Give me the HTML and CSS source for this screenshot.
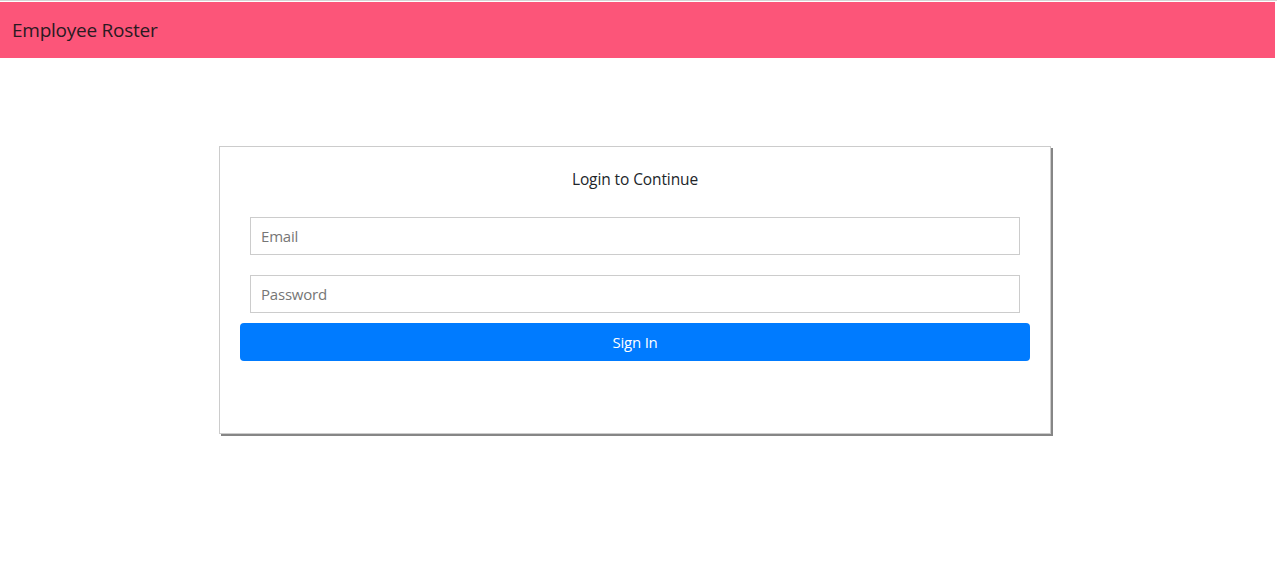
FILE: index.html
```html
<!DOCTYPE html>
<html lang="en">
<head>
<meta charset="utf-8">
<title>Employee Roster</title>
<link rel="stylesheet" href="styles.css">
</head>
<body>
<header class="topbar">
  <span class="brand">Employee Roster</span>
</header>
<main class="page">
  <form class="login-card">
    <h2 class="login-title">Login to Continue</h2>
    <input class="field" type="email" placeholder="Email">
    <input class="field field-password" type="password" placeholder="Password">
    <button class="signin" type="button">Sign In</button>
  </form>
</main>
</body>
</html>
```
FILE: styles.css
```css
* { box-sizing: border-box; }
html, body { margin: 0; padding: 0; background: #fff; }
body {
  font-family: "Open Sans", "Noto Sans", "Liberation Sans", sans-serif;
  color: #212529;
  border-top: 1px solid #d4d4d4;
  padding-top: 1px;
}
.topbar {
  width: calc(100% - 2px);
  height: 56px;
  background: #fc5579;
  display: flex;
  align-items: center;
  padding-left: 12px;
}
.brand {
  font-size: 19px;
  letter-spacing: -0.25px;
  color: #2a1a22;
}
.page {
  padding: 88px 0 40px 219px;
}
.login-card {
  width: 832px;
  height: 288px;
  border: 1px solid #cccccc;
  box-shadow: 2px 2px 0 0 #868686;
  display: flex;
  flex-direction: column;
  padding: 20px 20px 0 20px;
}
.login-title {
  margin: 0 0 26px 0;
  font-size: 15.5px;
  font-weight: 400;
  line-height: 24px;
  text-align: center;
  letter-spacing: -0.1px;
  color: #212529;
}
.field {
  margin: 0 10px;
  height: 38px;
  border: 1px solid #cccccc;
  border-radius: 0;
  padding: 0 10px;
  font-family: inherit;
  font-size: 15px;
  letter-spacing: -0.2px;
  color: #495057;
  outline: none;
}
.field::placeholder { color: #767676; }
.field-password { margin-top: 20px; }
.signin {
  margin-top: 10px;
  height: 38px;
  border: none;
  border-radius: 4px;
  background: #007bff;
  color: #fff;
  font-family: inherit;
  font-size: 15px;
  letter-spacing: -0.2px;
}
```
